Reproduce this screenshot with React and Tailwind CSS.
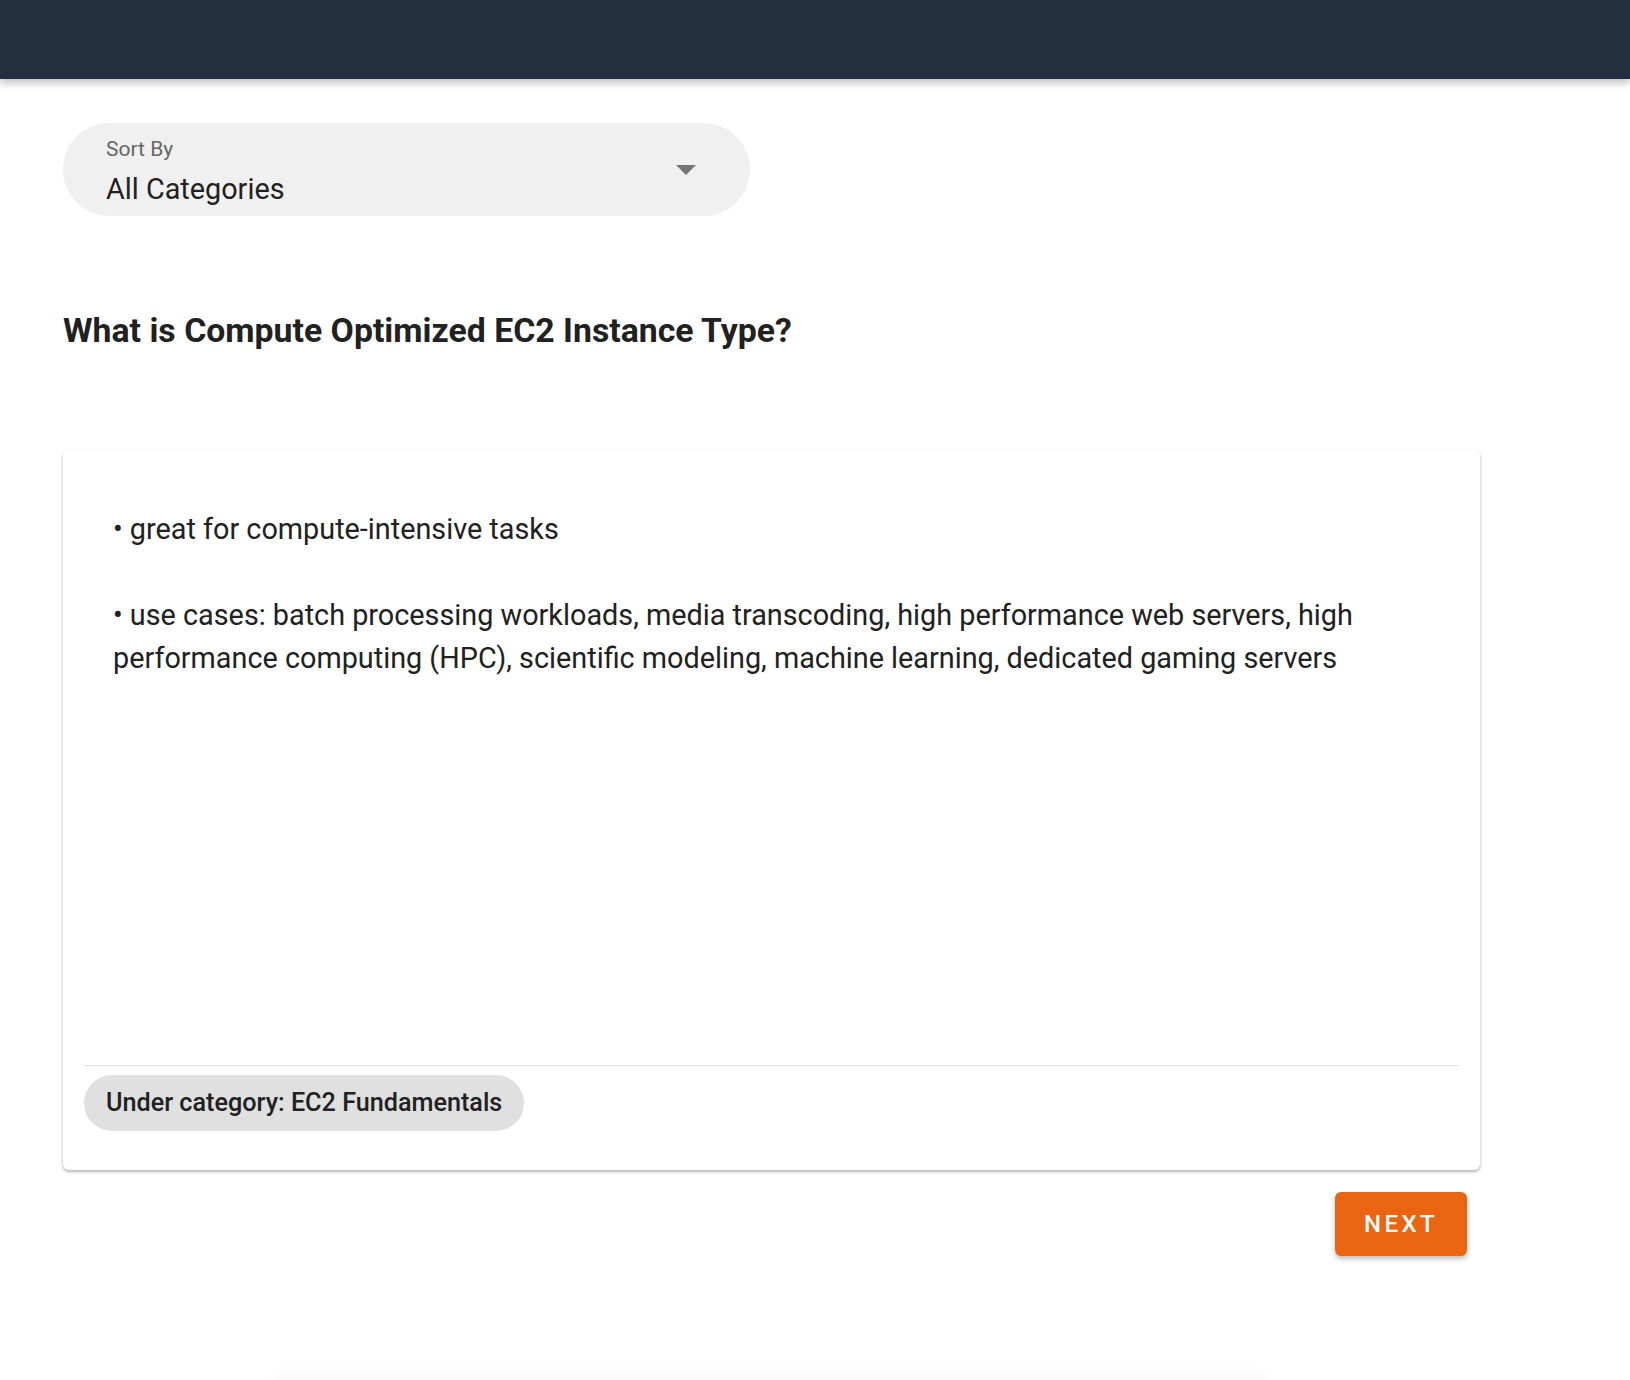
export default function App() {
  return (
    <div className="min-h-[1380px] bg-white font-['Roboto',sans-serif] text-[#212121] relative overflow-hidden">
      {/* App bar */}
      <div className="h-[79px] bg-[#232f3e] shadow-[0_4px_8px_rgba(0,0,0,0.25)]" />

      <div className="pl-[63px] pr-[150px]">
        {/* Sort select */}
        <div className="mt-[44px] w-[687px] h-[93px] rounded-full bg-[#f0f0f0] pl-[43px] pr-[54px] flex items-center justify-between">
          <div className="flex flex-col pt-[3px]">
            <span className="text-[21px] leading-[24px] text-[#666666]">Sort By</span>
            <span className="mt-[11px] text-[28.8px] leading-[34px] text-[#212121]">All Categories</span>
          </div>
          <svg width="20" height="12" viewBox="0 0 20 12" className="mt-[2px]">
            <path d="M0 0 L20 0 L10 10 Z" fill="#757575" />
          </svg>
        </div>

        {/* Question */}
        <h2 className="mt-[95px] text-[33.8px] leading-[40px] font-bold text-[#212121]">
          What is Compute Optimized EC2 Instance Type?
        </h2>

        {/* Card */}
        <div className="mt-[99px] w-[1417px] h-[720px] rounded-[6px] bg-white shadow-[0_2px_3px_rgba(0,0,0,0.25),0_1px_4px_rgba(0,0,0,0.08)] flex flex-col">
          <div className="flex-1 pt-[58px] px-[50px] text-[28.8px] leading-[43px] text-[#212121]">
            <p>• great for compute-intensive tasks</p>
            <p className="mt-[43px]">
              • use cases: batch processing workloads, media transcoding, high performance web servers, high performance computing (HPC), scientific modeling, machine learning, dedicated gaming servers
            </p>
          </div>
          <div className="mx-[21px] border-t border-[#e0e0e0]" />
          <div className="px-[21px] pt-[9px] pb-[39px]">
            <span className="inline-flex items-center h-[56px] px-[22px] rounded-full bg-[#e0e0e0] text-[25.2px] font-medium text-[#212121]">
              Under category: EC2 Fundamentals
            </span>
          </div>
        </div>

        {/* Next */}
        <div className="w-[1417px] flex justify-end pr-[13px] mt-[22px]">
          <button className="w-[132px] h-[64px] rounded-[6px] bg-[#ea6511] text-white text-[24px] font-medium tracking-[0.14em] shadow-[0_3px_5px_rgba(0,0,0,0.25)]">
            NEXT
          </button>
        </div>
      </div>

      {/* faint element at bottom */}
      <div className="absolute left-[270px] top-[1368px] w-[1000px] h-[40px] rounded-full bg-[#fbfbfb] blur-[3px]" />
    </div>
  );
}
